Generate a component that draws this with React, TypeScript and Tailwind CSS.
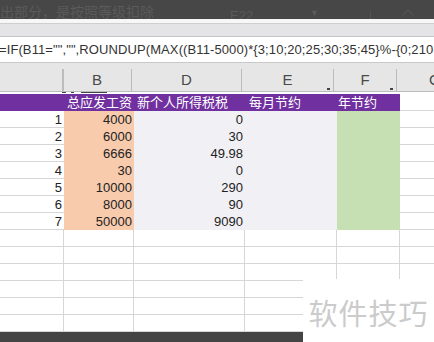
import React from "react";

const font = { fontFamily: '"Liberation Sans", "Noto Sans CJK SC", sans-serif' };

const salary = ["4000", "6000", "6666", "30", "10000", "8000", "50000"];
const tax = ["0", "30", "49.98", "0", "290", "90", "9090"];

const App = () => {
  return (
    <div className="relative w-[434px] h-[342px] overflow-hidden bg-white text-[13px] text-[#222]" style={font}>
      {/* dimmed ribbon area */}
      <div className="h-[19px] bg-[#474747] relative overflow-hidden">
        <span className="absolute left-0 top-[2px] text-[14px] text-[#5a5a5a] whitespace-nowrap">出部分，是按照等级扣除</span>
        <span className="absolute left-[230px] top-[6px] text-[13px] text-[#5a5a5a]">E22</span>
        <span className="absolute left-[310px] top-[7px] text-[9px] text-[#5a5a5a]">▼</span>
        <span className="absolute left-[370px] top-[11px] w-[6px] h-[8px] border-l border-[#555]"></span>
        <span className="absolute left-[404px] top-[11px] w-[8px] h-[8px] border-l border-t border-[#555] rotate-45"></span>
      </div>
      <div className="h-[4px] bg-[#f7f7f7]"></div>
      <div className="h-[12px] bg-[#e4e4e6] border-t border-[#cfcfcf] border-b border-b-[#c4c4c4] box-content"></div>

      {/* formula bar */}
      <div className="h-[26px] bg-white border-b border-[#c9c9c9] flex items-center overflow-hidden whitespace-nowrap">
        <span className="text-[13px] text-[#333] -ml-[1px] tracking-[0.1px]">=IF(B11="","",ROUNDUP(MAX((B11-5000)*{"{"}3;10;20;25;30;35;45{"}"}%-{"{"}0;210</span>
      </div>

      <div className="h-[6px] bg-[#e6e6e6]"></div>

      {/* column headers */}
      <div className="h-[23px] bg-[#e6e6e6] flex text-[15px] text-[#4a4a4a] border-b border-[#bdbdbd]">
        <div className="w-[64px] border-r border-[#bcbcbc]"></div>
        <div className="w-[70px] flex items-center justify-center border-l border-r border-[#bcbcbc] -ml-[2px]">B</div>
        <div className="w-[111px] flex items-center justify-center border-l border-r border-[#bcbcbc] -ml-[1px]">D</div>
        <div className="w-[92px] relative flex items-center justify-center border-r border-[#bcbcbc]">
          E<span className="absolute right-[3px] bottom-[1px] w-[3px] h-[2px] bg-[#444]"></span>
        </div>
        <div className="w-[63px] relative flex items-center justify-center border-r border-[#bcbcbc]">
          F<span className="absolute right-[3px] bottom-[1px] w-[3px] h-[2px] bg-[#444]"></span>
        </div>
        <div className="flex-1 flex items-center pl-[32px] overflow-hidden">G</div>
      </div>

      {/* cut-off row above the header row */}
      <div className="h-[2px] relative overflow-hidden bg-white">
        <span className="absolute left-[62px] top-[-1px] w-[4px] h-[2px] bg-[#444]"></span>
        <span className="absolute left-[71px] top-[-1px] w-[3px] h-[2px] bg-[#444]"></span>
        <span className="absolute left-[81px] top-[-1px] w-[26px] h-[2px] bg-[#444]"></span>
      </div>

      {/* title row */}
      <div className="h-[17px] flex text-white">
        <div className="w-[400px] bg-[#7030a0] flex items-center text-[13px]">
          <span className="w-[64px]"></span>
          <span className="w-[70px] pl-[3px]">总应发工资</span>
          <span className="w-[111px] pl-[3px] whitespace-nowrap">新个人所得税税</span>
          <span className="w-[92px] pl-[4px]">每月节约</span>
          <span className="w-[63px] pl-[1px]">年节约</span>
        </div>
        <div className="flex-1 border-b border-[#d6d6d6]"></div>
      </div>

      {/* data rows */}
      {salary.map((s, i) => (
        <div key={i} className="h-[17px] flex leading-[17px]">
          <div className="w-[64px] text-right pr-[2px] border-b border-[#d6d6d6]">{i + 1}</div>
          <div className="w-[70px] text-right pr-[2px] bg-[#f8cbad]">{s}</div>
          <div className="w-[111px] text-right pr-[2px] bg-[#f1f0f4]">{tax[i]}</div>
          <div className="w-[92px] bg-[#f1f0f4]"></div>
          <div className="w-[63px] bg-[#c6e0b4]"></div>
          <div className="flex-1 border-b border-[#d6d6d6]"></div>
        </div>
      ))}

      {/* empty rows */}
      {[0, 1, 2, 3, 4, 5].map((r) => (
        <div key={r} className="h-[17px] flex">
          <div className="w-[64px] border-b border-r border-[#d6d6d6]"></div>
          <div className="w-[70px] border-b border-r border-[#d6d6d6]"></div>
          <div className="w-[111px] border-b border-r border-[#d6d6d6]"></div>
          <div className="w-[92px] border-b border-r border-[#d6d6d6]"></div>
          <div className="w-[63px] border-b border-r border-[#d6d6d6]"></div>
          <div className="flex-1 border-b border-[#d6d6d6]"></div>
        </div>
      ))}

      <div className="h-[12px] bg-[#444444]"></div>

      {/* watermark */}
      <div className="absolute left-[303px] top-[279px] w-[131px] h-[63px] bg-white flex items-center justify-center">
        <span className="text-[29px] text-[#cbcbcb] tracking-[1px] mt-[4px]" style={{ fontFamily: '"Noto Sans CJK SC", sans-serif' }}>
          软件技巧
        </span>
      </div>
    </div>
  );
};

export default App;
